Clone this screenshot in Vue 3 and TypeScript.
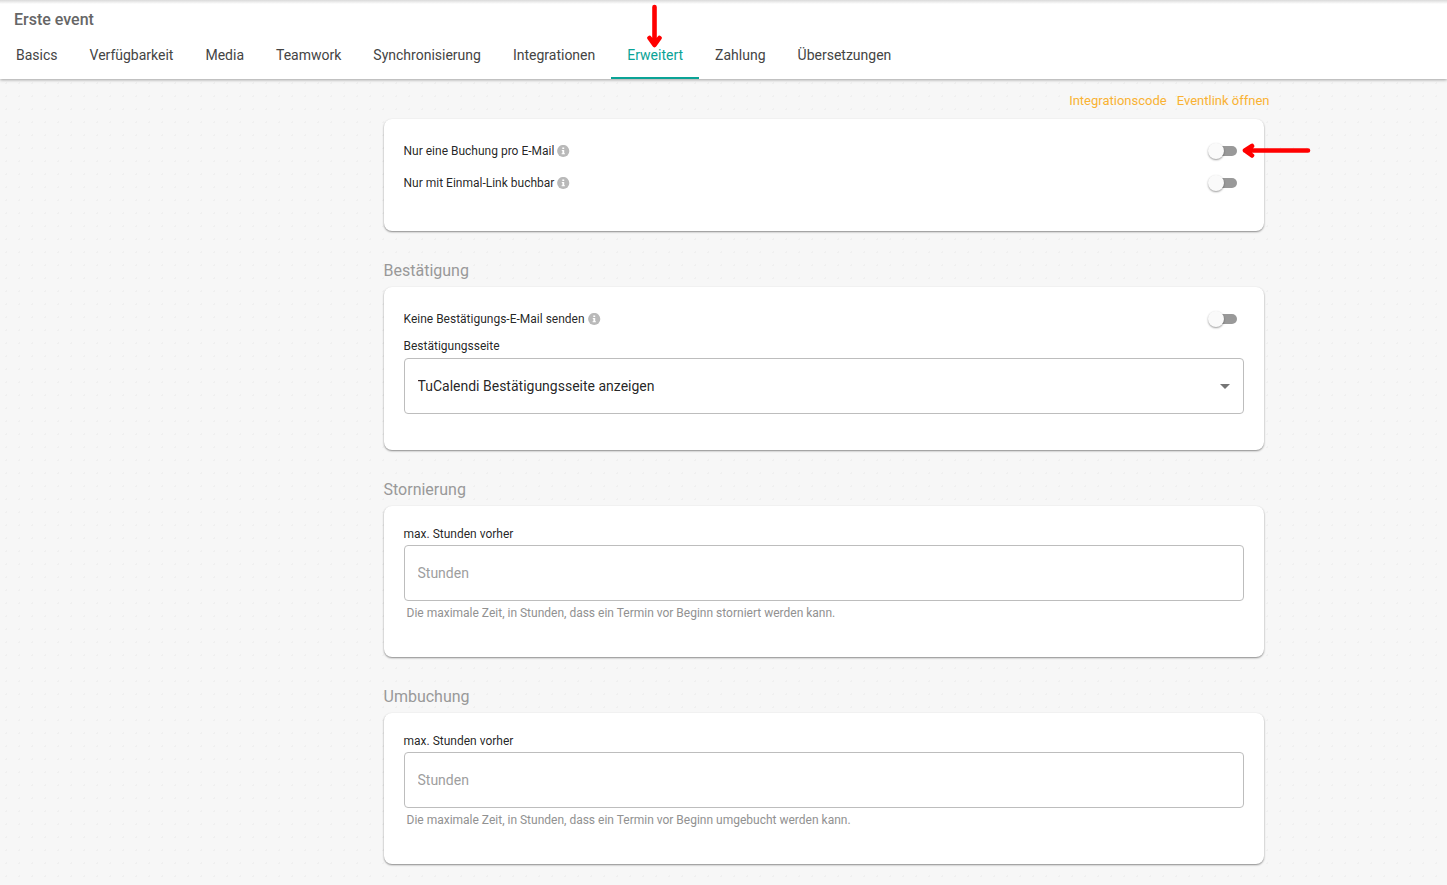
<script setup lang="ts">
import { ref } from 'vue'

interface ToggleRow {
  id: string
  label: string
  arrow?: boolean
}

interface HoursSection {
  id: string
  title: string
  hint: string
}

const tabs: string[] = [
  'Basics',
  'Verfügbarkeit',
  'Media',
  'Teamwork',
  'Synchronisierung',
  'Integrationen',
  'Erweitert',
  'Zahlung',
  'Übersetzungen',
]
const activeTab = ref('Erweitert')

const bookingRows: ToggleRow[] = [
  { id: 'one-per-mail', label: 'Nur eine Buchung pro E-Mail', arrow: true },
  { id: 'one-time-link', label: 'Nur mit Einmal-Link buchbar' },
]
const confirmRows: ToggleRow[] = [{ id: 'no-confirm-mail', label: 'Keine Bestätigungs-E-Mail senden' }]
const toggleGroups = { booking: bookingRows, confirm: confirmRows }

const toggles = ref<Record<string, boolean>>({
  'one-per-mail': false,
  'one-time-link': false,
  'no-confirm-mail': false,
})

const hoursSections: HoursSection[] = [
  {
    id: 'cancel',
    title: 'Stornierung',
    hint: 'Die maximale Zeit, in Stunden, dass ein Termin vor Beginn storniert werden kann.',
  },
  {
    id: 'rebook',
    title: 'Umbuchung',
    hint: 'Die maximale Zeit, in Stunden, dass ein Termin vor Beginn umgebucht werden kann.',
  },
]
const hours = ref<Record<string, string>>({ cancel: '', rebook: '' })
const confirmPage = ref('tucalendi')
</script>

<template>
  <div class="page">
    <header class="header">
      <h1 class="title">Erste event</h1>
      <nav class="tabs">
        <button
          v-for="tab in tabs"
          :key="tab"
          type="button"
          class="tab"
          :class="{ active: tab === activeTab }"
          @click="activeTab = tab"
        >
          {{ tab }}
          <svg v-if="tab === 'Erweitert'" class="arrow-down" width="16" height="46" viewBox="0 0 16 46" aria-hidden="true">
            <path d="M7.5 3V40M2.5 34L7.5 41L12.5 34" />
            <path class="tip" d="M2.5 34L7.5 42L12.5 34L7.5 36Z" />
          </svg>
        </button>
      </nav>
    </header>

    <main class="main">
      <div class="content">
        <div class="links">
          <a href="#code">Integrationscode</a>
          <a href="#open">Eventlink öffnen</a>
        </div>

        <template v-for="(rows, group) in toggleGroups" :key="group">
          <h2 v-if="group === 'confirm'" class="heading">Bestätigung</h2>
          <section class="card toggles">
            <div v-for="row in rows" :key="row.id" class="row">
              <label :for="row.id">{{ row.label }}</label>
              <svg class="info" width="13" height="13" viewBox="0 0 13 13" aria-hidden="true">
                <circle cx="6.2" cy="6" r="6.1" fill="#b9b9b9" />
                <path d="M5.3 2.4h1.9v1.6H5.3zM4.8 4.9h2.4v3.4h.7v1H4.6v-1h.8V5.9h-.6z" fill="#fff" />
              </svg>
              <span class="switch-wrap">
                <input :id="row.id" v-model="toggles[row.id]" type="checkbox" class="switch" />
                <svg v-if="row.arrow" class="arrow-left" width="72" height="18" viewBox="0 0 72 18" aria-hidden="true">
                  <path d="M5 8.5H68M12 4L5 8.5L12 13.5" />
                  <path class="tip" d="M12 4L4 8.5L12 13.5L10 8.5Z" />
                </svg>
              </span>
            </div>

            <div v-if="group === 'confirm'" class="field confirm">
              <label for="confirm-page">Bestätigungsseite</label>
              <div class="select-wrap">
                <select id="confirm-page" v-model="confirmPage" class="control">
                  <option value="tucalendi">TuCalendi Bestätigungsseite anzeigen</option>
                </select>
                <svg class="caret" width="10" height="5" viewBox="0 0 10 5" aria-hidden="true">
                  <path d="M0 0H10L5 5Z" fill="#757575" />
                </svg>
              </div>
            </div>
          </section>
        </template>

        <template v-for="s in hoursSections" :key="s.id">
          <h2 class="heading">{{ s.title }}</h2>
          <section class="card hours">
            <div class="field">
              <label :for="s.id">max. Stunden vorher</label>
              <input :id="s.id" v-model="hours[s.id]" type="text" class="control" placeholder="Stunden" />
              <p class="hint">{{ s.hint }}</p>
            </div>
          </section>
        </template>
      </div>
    </main>
  </div>
</template>

<style>
body {
  margin: 0;
  background: #f7f7f7;
}
</style>

<style scoped>
.page {
  min-height: 100vh;
  box-sizing: border-box;
  font-family: Roboto, 'Liberation Sans', sans-serif;
  color: rgba(0, 0, 0, 0.87);
  background-color: #f7f7f7;
  background-image: radial-gradient(circle, #f0f0f0 1px, transparent 1px);
  background-size: 13px 13px;
  background-position: 0 -1px;
}

.header {
  position: relative;
  padding-top: 8px;
  background: linear-gradient(#dadada, #fff 4px);
  box-shadow: 0 1px 3px rgba(0, 0, 0, 0.35);
}

.title {
  margin: 0;
  padding: 0 14px;
  font-size: 16px;
  line-height: 23px;
  font-weight: 500;
  color: #666;
}

.tabs {
  display: flex;
}

.tab {
  position: relative;
  height: 48px;
  padding: 0 16px;
  border: 0;
  background: none;
  font: 400 14px/20px Roboto, 'Liberation Sans', sans-serif;
  color: #444;
  cursor: pointer;
}

.tab.active {
  color: #0aa396;
  box-shadow: inset 0 -2px #0aa396;
}

.arrow-down,
.arrow-left {
  position: absolute;
  fill: none;
  stroke: #f00;
  stroke-width: 4.6;
  stroke-linecap: round;
  stroke-linejoin: round;
  pointer-events: none;
}

.arrow-down {
  left: 36px;
  top: -27px;
}

.arrow-left {
  left: 32px;
  top: -1px;
}

.tip {
  fill: #f00;
  stroke-width: 2;
}

.main {
  padding: 12px 0 21px 200px;
}

.content {
  max-width: 880px;
  margin: 0 auto;
}

.links {
  display: flex;
  justify-content: flex-end;
  gap: 10px;
  margin: 0 -6px 8px 0;
  font-size: 13px;
  line-height: 20px;
}

.links a {
  color: #f9b233;
  text-decoration: none;
}

.heading {
  margin: 28px 0 4px;
  font-size: 16px;
  line-height: 24px;
  font-weight: 400;
  color: #999;
}

.card {
  background: #fff;
  border-radius: 8px;
  box-shadow: 0 1px 2px rgba(0, 0, 0, 0.45);
  font-size: 12px;
  line-height: 16px;
}

.toggles {
  padding: 16px 20px 32px;
}

.hours {
  padding: 20px 20px 36px;
}

.row {
  display: flex;
  align-items: center;
  height: 32px;
}

.info {
  margin-left: 3px;
}

.switch-wrap {
  position: relative;
  display: flex;
  margin: 0 7px 0 auto;
}

.switch {
  appearance: none;
  position: relative;
  width: 29px;
  height: 16px;
  margin: 0;
  cursor: pointer;
}

.switch::before {
  content: '';
  position: absolute;
  inset: 3px 0 3px 3px;
  border-radius: 5px;
  background: #999;
}

.switch::after {
  content: '';
  position: absolute;
  left: 0;
  top: 0;
  width: 16px;
  height: 16px;
  border-radius: 50%;
  background: #fafafa;
  box-shadow: 0 1px 2px rgba(0, 0, 0, 0.4);
}

.switch:checked::before {
  background: #85d1cb;
}

.switch:checked::after {
  left: 13px;
  background: #0aa396;
}

.field {
  display: flex;
  flex-direction: column;
  gap: 3px;
}

.confirm {
  gap: 4px;
  padding: 3px 0 4px;
}

.select-wrap {
  position: relative;
}

.control {
  display: block;
  appearance: none;
  box-sizing: border-box;
  width: 100%;
  height: 56px;
  padding: 0 13px;
  border: 1px solid #bdbdbd;
  border-radius: 4px;
  background: #fff;
  font: 400 14px/20px Roboto, 'Liberation Sans', sans-serif;
  color: rgba(0, 0, 0, 0.87);
}

.control::placeholder {
  color: #9e9e9e;
  opacity: 1;
}

.caret {
  position: absolute;
  right: 14px;
  top: 26px;
  pointer-events: none;
}

.hint {
  margin: 0;
  padding: 1px 3px 0;
  color: #919191;
}
</style>
